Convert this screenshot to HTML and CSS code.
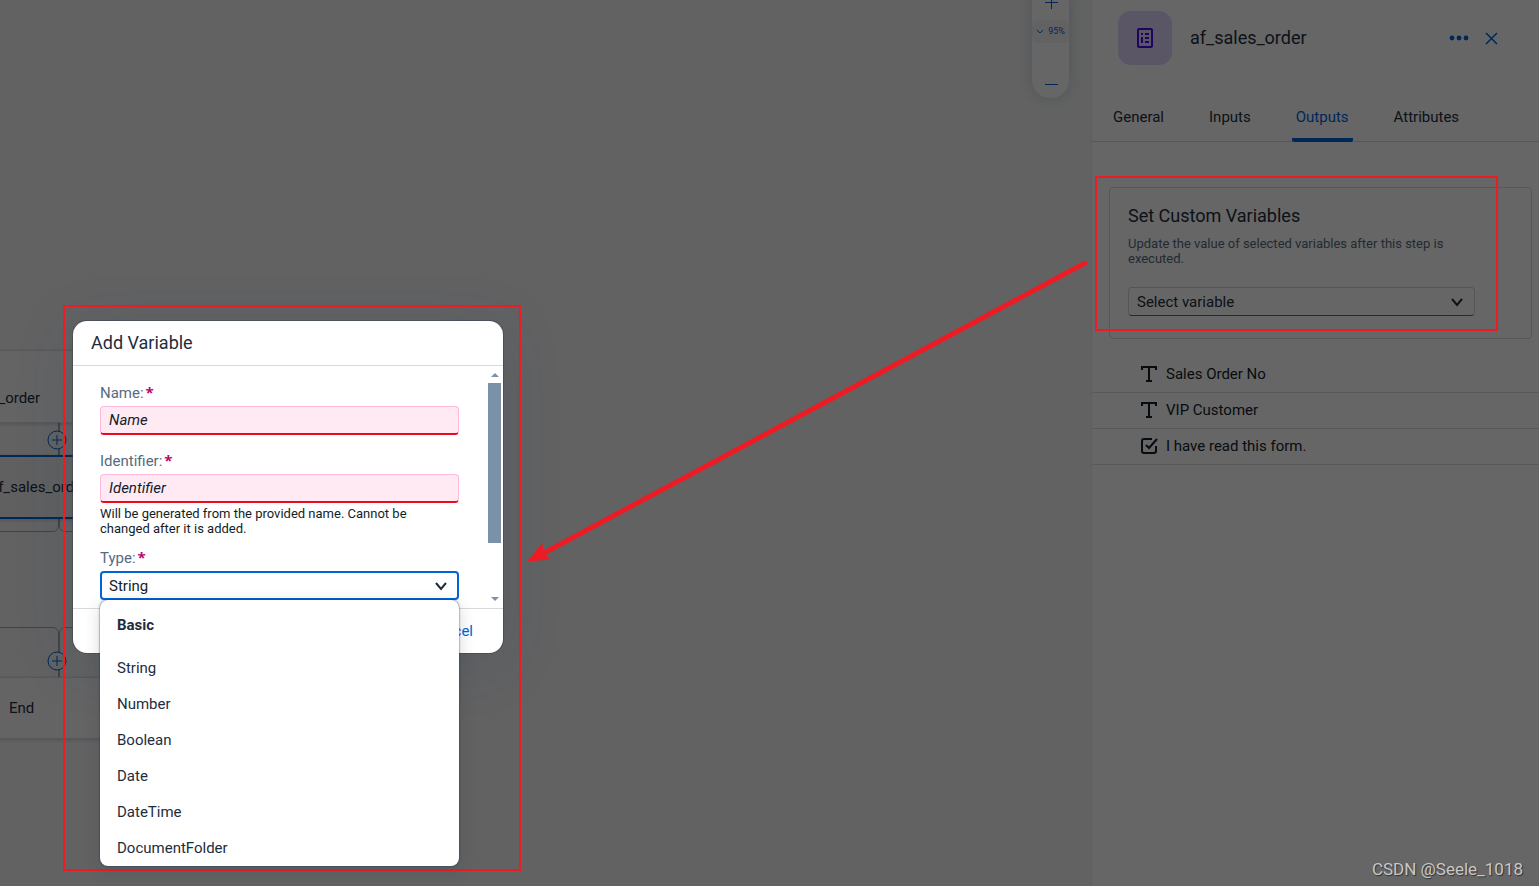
FILE: index.html
```
<!DOCTYPE html>
<html lang="en">
<head>
<meta charset="utf-8">
<title>Add Variable</title>
<link rel="stylesheet" href="styles.css">
</head>
<body>
<div class="app">
  <main class="canvas">
    <div class="flow-group group-top-left"></div>
    <div class="flow-group group-top-right"></div>
    <div class="flow-group group-bottom-left"></div>
    <div class="flow-group group-bottom-right"></div>
    <div class="connector connector-top"></div>
    <div class="connector connector-bottom"></div>
    <div class="node node-form"><span>af_sales_order</span></div>
    <div class="node node-selected"><span>af_sales_order</span></div>
    <div class="node node-end"><span>End</span></div>
    <button class="add-step add-top" aria-label="Add step"><svg viewBox="0 0 20 20"><circle cx="10" cy="10" r="9"/><path d="M10 5v10M5 10h10"/></svg></button>
    <button class="add-step add-bottom" aria-label="Add step"><svg viewBox="0 0 20 20"><circle cx="10" cy="10" r="9"/><path d="M10 5v10M5 10h10"/></svg></button>
    <div class="zoom-bar">
      <button aria-label="Zoom in"><svg viewBox="0 0 14 14"><path d="M7.500 1v13M1 7.500h13"/></svg></button>
      <button class="zoom-level"><svg class="zoom-caret" viewBox="0 0 8 8"><path d="M1 3l3 3 3-3"/></svg>95%</button>
      <button aria-label="Zoom out"><svg viewBox="0 0 14 14"><path d="M1 7.500h13"/></svg></button>
    </div>
  </main>
  <aside class="panel">
    <header class="panel-header">
      <div class="form-badge">
        <svg viewBox="0 0 16 20"><rect x="1" y="1" width="14" height="18" rx="1"/><path d="M4 6h2M8 6h4M4 10h2M8 10h4M5 9v5M4 14h2M8 14h4"/></svg>
      </div>
      <h1>af_sales_order</h1>
      <button class="icon-button" aria-label="More"><svg viewBox="0 0 20 14"><g class="dots"><circle cx="3" cy="7" r="2.400"/><circle cx="10" cy="7" r="2.400"/><circle cx="17" cy="7" r="2.400"/></g></svg></button>
      <button class="icon-button close" aria-label="Close"><svg viewBox="0 0 14 14"><path d="M1 2l11 11M12 2L1 13"/></svg></button>
    </header>
    <nav class="tabs">
      <a href="#general">General</a>
      <a href="#inputs">Inputs</a>
      <a href="#outputs" class="active" aria-current="page">Outputs</a>
      <a href="#attributes">Attributes</a>
    </nav>
    <section class="card">
      <h2>Set Custom Variables</h2>
      <p>Update the value of selected variables after this step is executed.</p>
      <div class="select-wrap">
        <select class="variable-select" aria-label="Select variable"><option>Select variable</option></select>
        <svg class="caret" viewBox="0 0 14 14"><path d="M2 4l5 6 5-6"/></svg>
      </div>
    </section>
    <ul class="outputs">
      <li><svg viewBox="0 0 18 18"><path d="M2 5V2h14v3M9 2v14M6 16h6"/></svg>Sales Order No</li>
      <li><svg viewBox="0 0 18 18"><path d="M2 5V2h14v3M9 2v14M6 16h6"/></svg>VIP Customer</li>
      <li><svg viewBox="0 0 18 18"><path d="M12 2H4Q2 2 2 4v10q0 2 2 2h10q2 0 2-2V9M6 8l3 3 8-9"/></svg>I have read this form.</li>
    </ul>
  </aside>
</div>
<div class="backdrop"></div>

<div class="dialog" role="dialog" aria-labelledby="dialog-title">
  <header class="dialog-header"><h2 id="dialog-title">Add Variable</h2></header>
  <div class="dialog-body">
    <form class="fields">
      <div class="field">
        <label for="name">Name:<b>*</b></label>
        <input id="name" type="text" placeholder="Name">
      </div>
      <div class="field">
        <label for="identifier">Identifier:<b>*</b></label>
        <input id="identifier" type="text" placeholder="Identifier">
        <p class="hint">Will be generated from the provided name. Cannot be changed after it is added.</p>
      </div>
      <div class="field">
        <label for="type">Type:<b>*</b></label>
        <div class="select-wrap">
          <select id="type" class="type-select"><option>String</option></select>
          <svg class="caret" viewBox="0 0 14 14"><path d="M2 4l5 6 5-6"/></svg>
          <div class="menu">
            <h3>Basic</h3>
            <ul role="listbox" aria-label="Type">
              <li role="option" aria-selected="true">String</li>
              <li role="option">Number</li>
              <li role="option">Boolean</li>
              <li role="option">Date</li>
              <li role="option">DateTime</li>
              <li role="option">DocumentFolder</li>
            </ul>
          </div>
        </div>
      </div>
    </form>
    <div class="scrollbar">
      <svg viewBox="0 0 8 4"><path d="M0 4l4-4 4 4z"/></svg>
      <div class="track"><div class="thumb"></div></div>
      <svg viewBox="0 0 8 4"><path d="M0 0l4 4 4-4z"/></svg>
    </div>
  </div>
  <footer class="dialog-footer"><button>Cancel</button></footer>
</div>

<div class="mark mark-dialog"></div>
<div class="mark mark-card"></div>
<svg class="arrow" viewBox="0 0 562 302"><path class="shaft" d="M558 2L17 292"/><path class="head" d="M1 300L15 283L16 290L18 294L22 298z"/></svg>
<div class="watermark">CSDN @Seele_1018</div>
</body>
</html>
```
FILE: styles.css
```
* { box-sizing: border-box; }
body {
  margin: 0;
  position: relative;
  overflow: hidden;
  font-family: Roboto, "Liberation Sans", sans-serif;
  font-size: 15px;
  line-height: 18px;
  color: #1d2d3e;
}
h1, h2, h3, p, ul { margin: 0; padding: 0; font-weight: 400; }
ul { list-style: none; }
button, input, select { font: inherit; color: inherit; }
button { border: 0; padding: 0; background: none; }
svg { display: block; fill: none; stroke: currentColor; }

.app { display: flex; min-height: 100vh; }

/* Workflow canvas */
.canvas { position: relative; flex: 1; background: #f5f6f7; overflow: hidden; }
.node {
  position: absolute;
  left: -140px;
  width: 400px;
  display: flex;
  align-items: center;
  background: #fbfbfc;
  border: 1px solid #d9dde1;
  box-shadow: 0 1px 4px #5566774d;
}
.node-form { top: 350px; height: 73px; padding: 22px 0 0 82px; }
.node-selected { top: 455px; height: 64px; padding-left: 128px; background: #eff1f2; border: 2px solid #0064d9; }
.node-end { top: 677px; height: 62px; padding-left: 148px; }
.connector { position: absolute; left: 58px; width: 2px; background: #a0a8b0; }
.connector-top { top: 423px; height: 33px; }
.connector-bottom { top: 632px; height: 46px; }
.flow-group { position: absolute; border: 1px solid #a0a8b0; height: 64px; width: 200px; border-radius: 6px; }
.group-top-left { left: -141px; top: 468px; }
.group-top-right { left: 59px; top: 468px; }
.group-bottom-left { left: -141px; top: 627px; }
.group-bottom-right { left: 59px; top: 627px; }
.add-step { position: absolute; left: 47px; color: #0064d9; }
.add-step svg { width: 20px; height: 20px; fill: #f5f6f7; }
.add-top { top: 430px; }
.add-bottom { top: 651px; }
.zoom-bar {
  position: absolute;
  right: 22px;
  top: -14px;
  width: 37px;
  height: 112px;
  padding: 9px 0 7px;
  display: flex;
  flex-direction: column;
  justify-content: space-between;
  background: #fff;
  border-radius: 18px;
  box-shadow: 0 0 16px #55667740;
  color: #0064d9;
}
.zoom-bar svg { width: 14px; height: 14px; margin: 0 auto; }
.zoom-bar .zoom-level {
  display: flex;
  align-items: center;
  justify-content: center;
  gap: 4px;
  height: 23px;
  margin-bottom: 24px;
  border-radius: 6px;
  background: #f5f5f5;
  font-size: 9px;
}
.zoom-bar .zoom-caret { width: 8px; height: 8px; margin: 0; }

/* Properties panel */
.panel { width: 448px; background: #fff; border-left: 1px solid #eceef0; }
.panel-header { display: flex; align-items: center; height: 76px; padding: 0 40px 0 26px; }
.form-badge {
  display: grid;
  place-items: center;
  width: 54px;
  height: 54px;
  border-radius: 13px;
  background: #e2d8ff;
  color: #470ced;
}
.form-badge svg { width: 16px; height: 20px; stroke-width: 2; }
.panel-header h1 { flex: 1; padding-left: 18px; font-size: 18px; }
.icon-button { color: #0064d9; }
.icon-button svg { width: 20px; height: 14px; stroke-width: 1.5; }
.icon-button.close svg { width: 14px; margin-left: 16px; }
.icon-button .dots { fill: currentColor; stroke: none; }
.tabs { display: flex; gap: 37px; height: 66px; padding-left: 17px; border-bottom: 1px solid #d9d9d9; }
.tabs a { padding: 32px 4px 0; height: 66px; color: inherit; text-decoration: none; }
.tabs .active { color: #0064d9; border-bottom: 4px solid #0064d9; border-radius: 2px; }
.card { margin: 45px 7px 0 17px; padding: 18px 56px 22px 18px; border: 1px solid #d9d9d9; border-radius: 4px; }
.card h2 { font-size: 18px; line-height: 20px; }
.card p { margin: 10px 0 21px; font-size: 13px; line-height: 15px; color: #556b82; }
.select-wrap { position: relative; }
select { appearance: none; display: block; width: 100%; height: 29px; padding: 0 8px; border-radius: 4px; background: #fff; }
.variable-select { border: 1px solid #d0d5da; border-bottom-color: #556b82; }
.caret { position: absolute; right: 11px; top: 8px; width: 14px; height: 14px; stroke-width: 2; pointer-events: none; }
.outputs { margin-top: 18px; }
.outputs li { display: flex; align-items: center; gap: 8px; height: 36px; padding: 0 0 2px 48px; border-bottom: 1px solid #dedede; color: #131e29; }
.outputs svg { width: 18px; height: 18px; stroke-width: 2; }

.backdrop { position: absolute; inset: 0; background: rgba(0, 0, 0, 0.6); }

/* Add Variable dialog */
.dialog {
  position: absolute;
  left: 73px;
  top: 321px;
  width: 430px;
  background: #fff;
  border-radius: 14px;
  box-shadow: 0 0 0 1px #35414e80, 0 10px 60px #223c5a26;
}
.dialog-header { padding: 12px 18px; border-bottom: 1px solid #d9d9d9; }
.dialog-header h2 { font-size: 18px; line-height: 20px; }
.dialog-body { display: flex; height: 243px; border-bottom: 1px solid #d9d9d9; }
.fields { flex: 1; padding: 18px 29px 0 27px; }
.field { margin-bottom: 17px; }
.field label { display: block; margin-bottom: 4px; color: #556b82; }
.field label b { padding-left: 2px; font-family: "Open Sans", sans-serif; font-size: 15px; line-height: 16px; color: #ba066c; }
.field input {
  display: block;
  width: 100%;
  height: 29px;
  padding: 0 8px;
  border: 1px solid #ffb8d8;
  border-bottom: 2px solid #e90b1c;
  border-radius: 4px;
  background: #ffeaf4;
}
.field input::placeholder { color: #131e29; opacity: 1; font-style: italic; }
.field .hint { margin: 3px 0 -4px; font-size: 13px; line-height: 15px; color: #131e29; }
.type-select { padding: 0 7px; border: 2px solid #0064d9; color: #131e29; }
.menu {
  position: absolute;
  left: 0;
  right: 0;
  top: 29px;
  padding: 16px 0 0;
  background: #fff;
  border-radius: 8px;
  box-shadow: 0 0 2px #223548, 0 4px 16px #22354833;
  z-index: 2;
}
.menu h3 { padding: 0 17px 16px; font-weight: 700; font-size: 15px; line-height: 18px; }
.menu li { padding: 9px 17px; }
.scrollbar { display: flex; flex-direction: column; align-items: center; gap: 6px; width: 13px; margin: 7px 2px 7px 0; color: #7b91a8; }
.scrollbar svg { width: 8px; height: 4px; fill: currentColor; stroke: none; }
.track { flex: 1; width: 100%; }
.thumb { height: 160px; background: #7b91a8; }
.dialog-footer { display: flex; justify-content: flex-end; align-items: center; height: 44px; padding-right: 30px; color: #0064d9; border-radius: 14px; }

/* Callouts */
.mark { position: absolute; border: 2px solid #ed1c24; pointer-events: none; }
.mark-dialog { left: 63px; top: 305px; width: 458px; height: 566px; }
.mark-card { right: 41px; top: 176px; width: 403px; height: 155px; }
.arrow { position: absolute; left: 527px; top: 261px; width: 562px; height: 302px; color: #ed1c24; }
.shaft { stroke-width: 5; stroke-linecap: round; }
.head { fill: currentColor; }
.watermark { position: absolute; right: 16px; bottom: 8px; font-size: 17px; color: #c8c8c8; text-shadow: 1px 1px 1px #333; }
```
